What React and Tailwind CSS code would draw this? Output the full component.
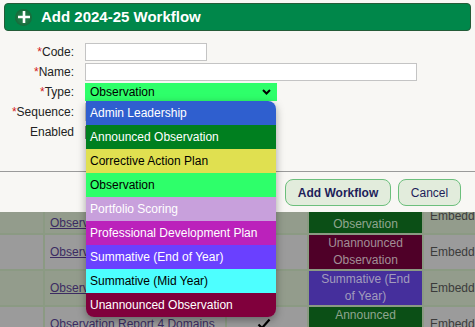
const options = [
  { label: "Admin Leadership", cls: "bg-[#2f5fcf] text-white" },
  { label: "Announced Observation", cls: "bg-[#007f1f] text-white" },
  { label: "Corrective Action Plan", cls: "bg-[#e0e050] text-black" },
  { label: "Observation", cls: "bg-[#2eff6a] text-black" },
  { label: "Portfolio Scoring", cls: "bg-[#c8a0dc] text-white" },
  { label: "Professional Development Plan", cls: "bg-[#bb22bb] text-white" },
  { label: "Summative (End of Year)", cls: "bg-[#6a40ff] text-white" },
  { label: "Summative (Mid Year)", cls: "bg-[#4dffff] text-black" },
  { label: "Unannounced Observation", cls: "bg-[#80003c] text-white" },
];

const rows = [
  {
    title: "Observation Notes",
    titleCls: "items-end pb-[1px]",
    badge: ["Announced", "Observation"],
    badgeCls: "bg-[#0b4f16] text-[#8fa68f]",
    bg: "bg-[#939c8c]",
  },
  {
    title: "Observation Notes",
    titleCls: "items-center",
    badge: ["Unannounced", "Observation"],
    badgeCls: "bg-[#4f0028] text-[#a28e96]",
    bg: "bg-[#9b9b9b]",
  },
  {
    title: "Observation Summary",
    titleCls: "items-center",
    badge: ["Summative (End", "of Year)"],
    badgeCls: "bg-[#452f9c] text-[#a29cbc]",
    bg: "bg-[#939c8c]",
  },
  {
    title: "Observation Report 4 Domains",
    titleCls: "items-center",
    badge: ["Announced", "Observation"],
    badgeCls: "bg-[#0b4f16] text-[#8fa68f]",
    bg: "bg-[#9b9b9b]",
  },
];

const Label = ({ req, children }) => (
  <div className="w-[74px] text-right text-[12px] text-[#222] leading-[18px]">
    {req && <span className="text-[#d42020]">*</span>}
    {children}
  </div>
);

export default function App() {
  return (
    <div className="relative w-[475px] h-[327px] overflow-hidden bg-[#f8f7f4] font-['Liberation_Sans',Arial,sans-serif]">
      {/* dialog */}
      <div className="relative z-10 h-[212px] flex flex-col bg-[#f8f7f4]">
        <div className="mx-[4px] mt-[3px] h-[28px] flex items-center gap-[9px] pl-[10px] rounded-[4px] bg-[#00874a] border border-[#245c38]">
          <div className="w-[17px] h-[17px] rounded-full bg-[radial-gradient(circle,#1f7a45_40%,#0f5a30_100%)] flex items-center justify-center">
            <svg width="14" height="14" viewBox="0 0 14 14">
              <path d="M7 1v12M1 7h12" stroke="white" strokeWidth="2.6" />
            </svg>
          </div>
          <span className="text-white font-bold text-[15px]">Add 2024-25 Workflow</span>
        </div>

        <div className="mt-[12px] flex flex-col gap-[2px]">
          <div className="flex items-center gap-[11px] h-[18px]">
            <Label req>Code:</Label>
            <div className="w-[122px] h-[18px] bg-white border border-[#c4c4c4]" />
          </div>
          <div className="flex items-center gap-[11px] h-[18px]">
            <Label req>Name:</Label>
            <div className="w-[332px] h-[18px] bg-white border border-[#c4c4c4]" />
          </div>
          <div className="flex items-center gap-[11px] h-[18px]">
            <Label req>Type:</Label>
            <div className="w-[192px] h-[18px] bg-[#2eff6a] flex items-center justify-between pl-[5px] pr-[6px] text-[12px] text-black">
              <span>Observation</span>
              <svg width="9" height="6" viewBox="0 0 9 6">
                <path d="M1 1l3.5 3.5L8 1" fill="none" stroke="black" strokeWidth="2" />
              </svg>
            </div>
          </div>
          <div className="flex items-center gap-[11px] h-[18px]">
            <Label req>Sequence:</Label>
            <div className="w-[60px] h-[18px] bg-white border border-[#c4c4c4]" />
          </div>
          <div className="flex items-center gap-[11px] h-[18px]">
            <Label>Enabled</Label>
            <div className="w-[13px] h-[13px] bg-white border border-[#888]" />
          </div>
        </div>

        <div className="mt-auto border-t border-[#9a9a9a] h-[41px] flex items-start justify-end gap-[7px] pr-[14px] pt-[7px]">
          <button className="w-[106px] h-[27px] rounded-[8px] bg-[#e2ecdc] border-[1.5px] border-[#6cbf7c] text-[12px] font-bold text-[#1e1e5a]">
            Add Workflow
          </button>
          <button className="w-[63px] h-[27px] rounded-[8px] bg-[#e2ecdc] border-[1.5px] border-[#6cbf7c] text-[12px] text-[#1e1e5a]">
            Cancel
          </button>
        </div>
      </div>

      {/* dimmed table behind the dialog */}
      <div className="-mt-[13px] flex flex-col gap-[2px] bg-[#8b9a83] text-[12px]">
        {rows.map((r, i) => (
          <div key={i} className="flex h-[34px] gap-[2px]">
            <div className={`w-[43px] ${r.bg}`} />
            <div className={`w-[180px] ${r.bg} flex ${r.titleCls} pl-[5px] text-[#3c2b62] underline leading-[17px] whitespace-nowrap overflow-hidden`}>
              <span>{r.title}</span>
            </div>
            <div className={`w-[80px] ${r.bg} flex items-center pl-[30px]`}>
              <svg width="14" height="12" viewBox="0 0 14 12">
                <path d="M1.5 6.5l3.5 3.5L12.5 1.5" fill="none" stroke="black" strokeWidth="2.2" />
              </svg>
            </div>
            <div className={`w-[113px] ${r.badgeCls} flex flex-col items-center justify-center leading-[17px] text-[12px]`}>
              <span>{r.badge[0]}</span>
              <span>{r.badge[1]}</span>
            </div>
            <div className={`flex-1 ${r.bg} flex items-center pl-[6px] text-[#3b3b3b] whitespace-nowrap overflow-hidden`}>
              Embedded
            </div>
          </div>
        ))}
      </div>

      {/* open select list */}
      <div className="absolute z-20 left-[86px] top-[101px] w-[190px] rounded-tr-[8px] rounded-b-[8px] overflow-hidden shadow-[0_3px_8px_rgba(0,0,0,0.35)]">
        {options.map((o) => (
          <div key={o.label} className={`h-[24px] flex items-center pl-[4px] text-[12px] whitespace-nowrap ${o.cls}`}>
            {o.label}
          </div>
        ))}
      </div>
    </div>
  );
}
